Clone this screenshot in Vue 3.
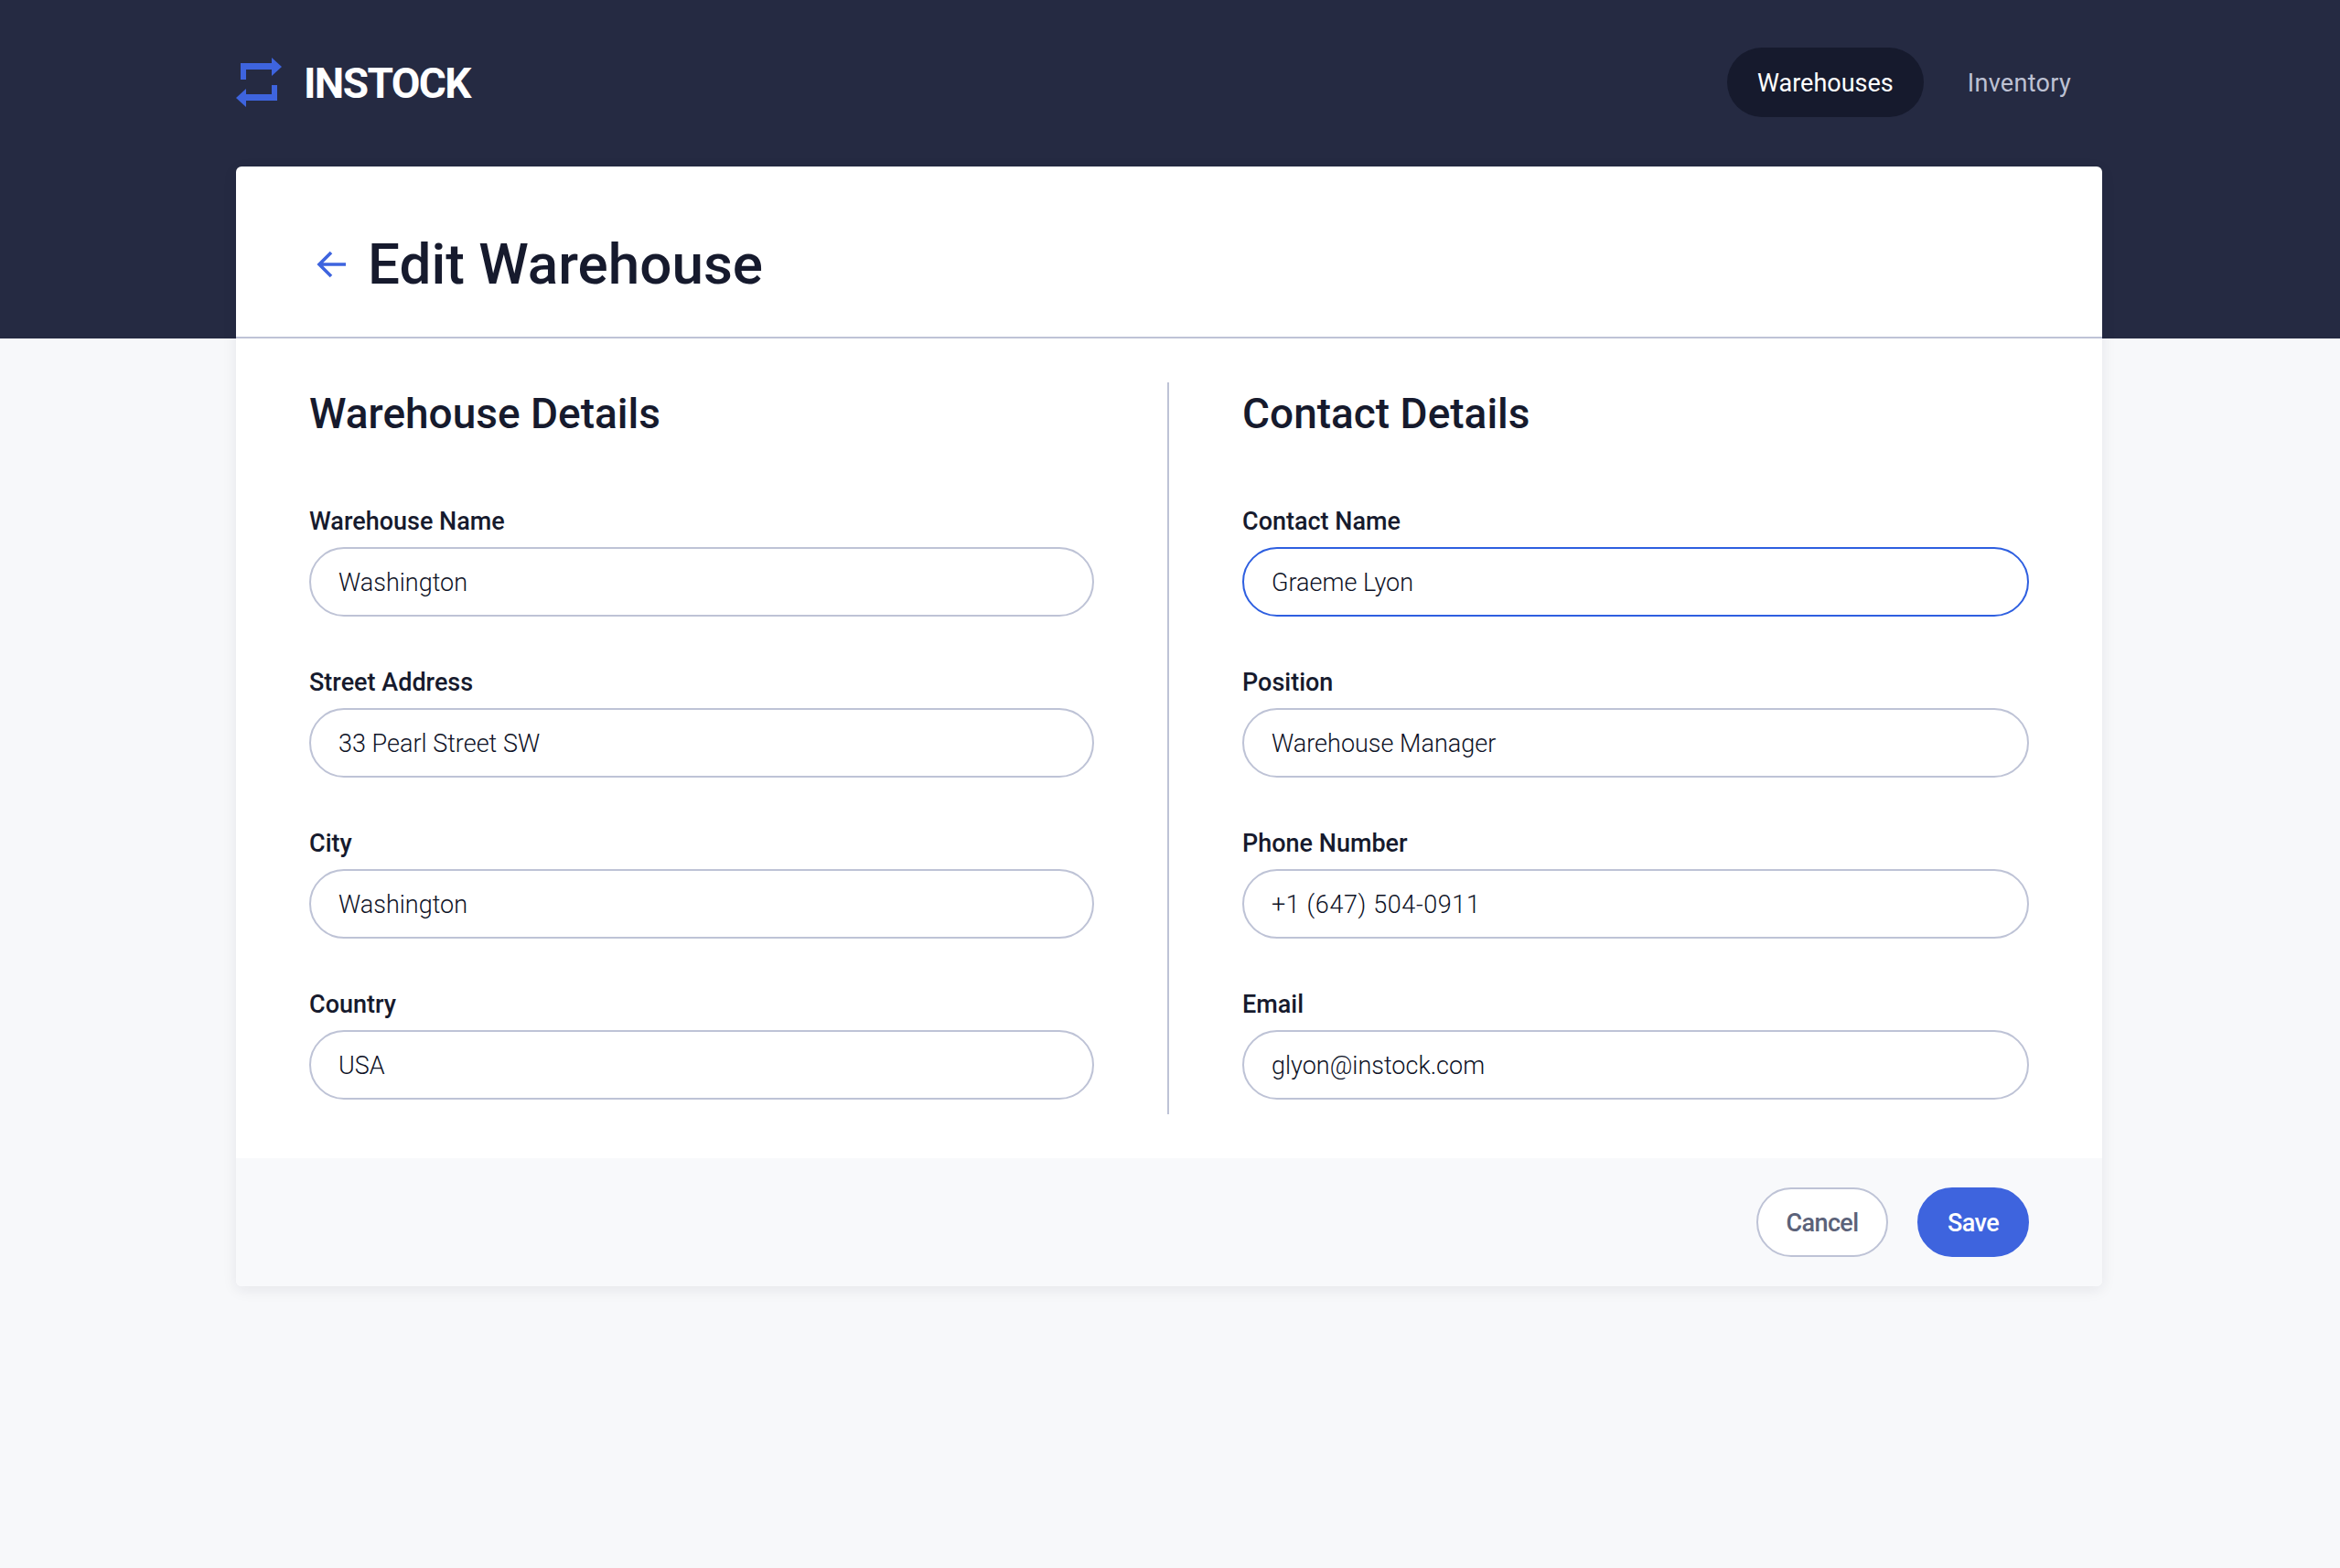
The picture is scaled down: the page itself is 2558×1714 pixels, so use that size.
<script setup>
const left = [
  { label: 'Warehouse Name', value: 'Washington' },
  { label: 'Street Address', value: '33 Pearl Street SW' },
  { label: 'City', value: 'Washington' },
  { label: 'Country', value: 'USA' },
]
const right = [
  { label: 'Contact Name', value: 'Graeme Lyon', focus: true },
  { label: 'Position', value: 'Warehouse Manager' },
  { label: 'Phone Number', value: '+1 (647) 504-0911', wide: true },
  { label: 'Email', value: 'glyon@instock.com' },
]
const cols = [
  { title: 'Warehouse Details', fields: left },
  { title: 'Contact Details', fields: right },
]
</script>

<template>
  <div class="page">
    <header class="top">
      <div class="brand">
        <svg class="logo" width="50" height="54" viewBox="0 0 50 54">
          <path fill="#3e64de" d="M5 6H39V0L50 10 39 20V13H11V24H5Z" />
          <path fill="#3e64de" d="M45 47H11V54L0 44 11 34V40H39V30H45Z" />
        </svg>
        <span class="word">INSTOCK</span>
      </div>
      <nav class="nav">
        <a class="pill active">Warehouses</a>
        <a class="pill inv">Inventory</a>
      </nav>
    </header>
    <main class="card">
      <div class="head">
        <svg class="back" width="32" height="32" viewBox="0 0 32 32">
          <path fill="none" stroke="#3e64de" stroke-width="3.6" d="M32 16H3M16 3 3 16l13 13" />
        </svg>
        <h1>Edit Warehouse</h1>
      </div>
      <div class="body">
        <section v-for="c in cols" :key="c.title" class="col">
          <h2>{{ c.title }}</h2>
          <div class="fields">
            <label v-for="f in c.fields" :key="f.label" class="field">
              <span class="lab">{{ f.label }}</span>
              <input class="inp" :class="{ focus: f.focus, wide: f.wide }" :value="f.value" />
            </label>
          </div>
        </section>
      </div>
      <footer class="foot">
        <button class="btn cancel">Cancel</button>
        <button class="btn save">Save</button>
      </footer>
    </main>
  </div>
</template>

<style>
html, body { margin: 0; background: #f7f8fa; }
</style>

<style scoped>
.page { min-height: 1714px; background: #f7f8fa; font-family: Roboto, "Liberation Sans", sans-serif; color: #161a2d; }
.top { height: 370px; box-sizing: border-box; background: #252a42; padding: 52px 261px 0 258px; display: flex; justify-content: space-between; align-items: flex-start; }
.brand { display: flex; align-items: center; height: 76px; gap: 24px; }
.logo { display: block; }
.word { color: #fff; font-size: 46px; font-weight: 700; letter-spacing: -1.6px; padding-top: 2px; }
.nav { display: flex; gap: 15px; }
.pill { height: 76px; box-sizing: border-box; padding: 2px 33px 0; border-radius: 38px; display: flex; align-items: center; font-size: 27px; color: #bdc1d3; }
.pill.inv { letter-spacing: 0.3px; }
.pill.active { background: #161a2d; color: #fff; }
.card { width: 2040px; margin: -188px 0 0 258px; background: #fff; border-radius: 6px; box-shadow: 0 4px 16px rgba(22, 26, 45, 0.08); position: relative; overflow: hidden; }
.head { height: 188px; box-sizing: border-box; display: flex; align-items: center; gap: 24px; padding: 28px 88px 0; border-bottom: 2px solid #bec3d6; }
h1 { margin: 0; font-size: 62px; font-weight: 500; line-height: 1; }
.body { display: grid; grid-template-columns: 1fr 1fr; padding: 48px 0; }
.col { padding: 0 80px; }
.col:first-child { border-right: 2px solid #bec3d6; }
h2 { margin: 0; font-size: 46px; font-weight: 500; line-height: 64px; padding: 2px 0 62px; }
.fields { display: flex; flex-direction: column; gap: 48px; padding-bottom: 16px; }
.field { display: flex; flex-direction: column; }
.lab { font-size: 27px; font-weight: 500; line-height: 44px; padding-top: 2px; margin-bottom: 6px; }
.inp { height: 76px; box-sizing: border-box; width: 100%; border: 2px solid #bec3d6; border-radius: 38px; padding: 2px 30px 0; font: 300 27px Roboto, sans-serif; color: #0e1226; outline: none; background: #fff; }
.inp.wide { letter-spacing: 0.6px; }
.inp.focus { border-color: #2e5fe0; }
.foot { height: 140px; box-sizing: border-box; background: #f8f9fb; padding: 32px 80px; display: flex; justify-content: flex-end; gap: 32px; }
.btn { height: 76px; box-sizing: border-box; border-radius: 38px; padding: 2px 20px 0; font: 500 27px Roboto, sans-serif; letter-spacing: -0.6px; border: 2px solid #bec3d6; }
.cancel { background: #fff; color: #5b6279; width: 144px; }
.save { background: #3e64de; border-color: #3e64de; color: #fff; width: 122px; }
</style>
